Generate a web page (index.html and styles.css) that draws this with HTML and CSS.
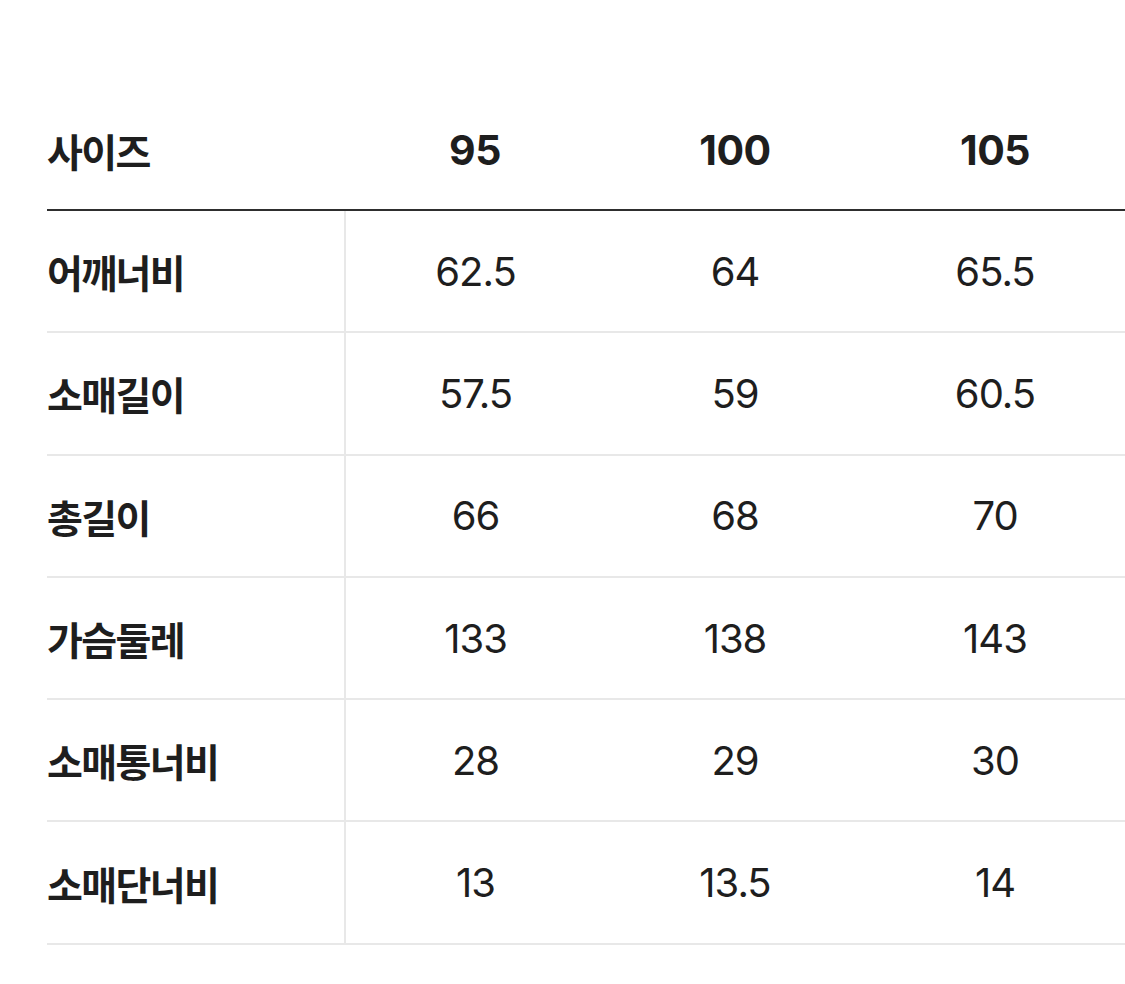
FILE: index.html
```html
<!DOCTYPE html>
<html lang="ko">
<head>
<meta charset="utf-8">
<title>사이즈</title>
<link rel="stylesheet" href="styles.css">
</head>
<body>
<table class="size-table">
  <colgroup>
    <col class="col-label">
    <col class="col-data">
    <col class="col-data">
    <col class="col-data">
  </colgroup>
  <thead>
    <tr>
      <th class="label">사이즈</th>
      <th>95</th>
      <th>100</th>
      <th>105</th>
    </tr>
  </thead>
  <tbody>
    <tr><th class="label">어깨너비</th><td>62.5</td><td>64</td><td>65.5</td></tr>
    <tr><th class="label">소매길이</th><td>57.5</td><td>59</td><td>60.5</td></tr>
    <tr><th class="label">총길이</th><td>66</td><td>68</td><td>70</td></tr>
    <tr><th class="label">가슴둘레</th><td>133</td><td>138</td><td>143</td></tr>
    <tr><th class="label">소매통너비</th><td>28</td><td>29</td><td>30</td></tr>
    <tr><th class="label">소매단너비</th><td>13</td><td>13.5</td><td>14</td></tr>
  </tbody>
</table>
</body>
</html>
```

FILE: styles.css
```css
html, body {
  margin: 0;
  padding: 0;
  background: #ffffff;
}

body {
  font-family: Inter, "Noto Sans CJK KR", sans-serif;
  color: #1e1e1e;
}

.size-table {
  margin: 90px 0 0 47px;
  width: 1078px;
  border-collapse: collapse;
  table-layout: fixed;
}

.col-label { width: 298px; }
.col-data { width: 260px; }

.size-table th,
.size-table td {
  padding: 0;
  text-align: center;
  vertical-align: middle;
}

.size-table thead th {
  height: 119px;
  font-size: 41px;
  font-weight: 700;
  letter-spacing: -0.5px;
  border-bottom: 2px solid #2e2e2e;
}

.size-table tbody th,
.size-table tbody td {
  height: 120.3px;
  border-bottom: 2px solid #e8e8e8;
}

.size-table tbody td {
  font-size: 40px;
  font-weight: 400;
  letter-spacing: -1px;
}

.size-table .label {
  text-align: left;
  font-family: "Noto Sans CJK KR", sans-serif;
  font-size: 39px;
  font-weight: 700;
  letter-spacing: -1.6px;
}

.size-table tbody .label {
  border-right: 2px solid #e8e8e8;
}
```
